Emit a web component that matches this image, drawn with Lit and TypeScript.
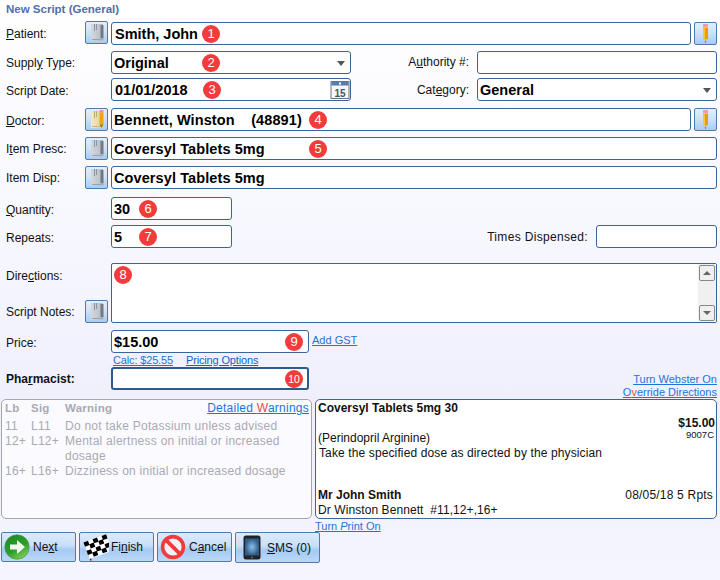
import { LitElement, html, css, svg } from "lit";
import { customElement } from "lit/decorators.js";

const bookIcon = (yellow = false) => html`<svg width="21" height="21" viewBox="0 0 21 21">
  <defs><linearGradient id="bk${yellow ? "y" : "g"}" x1="0" x2="1" y1="0" y2="0">
    <stop offset="0" stop-color="${yellow ? "#f4ecc0" : "#d4d9e0"}"/><stop offset="1" stop-color="${yellow ? "#e0d088" : "#b4bac4"}"/></linearGradient></defs>
  <rect x="5" y="2" width="12" height="17" fill="url(#bk${yellow ? "y" : "g"})"/>
  <path d="M8.5 2v7M10.5 2v6" stroke="${yellow ? "#b8aa70" : "#8e949e"}" stroke-width="1" fill="none"/>
  <path d="M6 17.5h10" stroke="${yellow ? "#c8b878" : "#9aa0a8"}"/>
  ${yellow
    ? svg`<rect x="13.5" y="1" width="4" height="2.5" fill="#f08ab0"/><rect x="13.5" y="3.5" width="4" height="12" fill="#f2a414"/><path d="M13.5 15.5h4l-2 3.5z" fill="#8a7a50"/>`
    : svg`<rect x="14.5" y="3" width="3" height="13" fill="#74787f"/><rect x="14.5" y="16" width="3" height="2" fill="#a8acb4"/>`}
</svg>`;

const pencilIcon = html`<svg width="21" height="21" viewBox="0 0 21 21">
  <rect x="8" y="1" width="5" height="3" fill="#f09ab8"/>
  <rect x="8" y="4" width="5" height="1" fill="#c8c8c0"/>
  <rect x="8" y="5" width="2" height="11" fill="#f8c828"/>
  <rect x="10" y="5" width="3" height="11" fill="#ee9a10"/>
  <path d="M8 16h5l-2.5 4z" fill="#c8c0a8"/><path d="M9.8 18.5h1.4l-.7 1.5z" fill="#444"/>
</svg>`;

const calendarIcon = html`<svg width="20" height="20" viewBox="0 0 20 20">
  <rect x="1" y="1.5" width="18" height="17" fill="#f6f6f6" stroke="#6a7682"/>
  <rect x="1.5" y="2" width="17" height="3.5" fill="#4f7db8"/>
  <rect x="9" y="2.5" width="2" height="2" fill="#fff"/>
  <text x="10" y="16.5" text-anchor="middle" font-family="Liberation Sans" font-size="10" fill="#4a5460">15</text>
</svg>`;

const nextIcon = html`<svg width="26" height="26" viewBox="0 0 26 26">
  <defs><linearGradient id="gn" x1="0.2" y1="0" x2="0.8" y2="1"><stop offset="0" stop-color="#1c8c20"/><stop offset=".55" stop-color="#2f9c2c"/><stop offset="1" stop-color="#86d860"/></linearGradient></defs>
  <circle cx="13" cy="13" r="12.2" fill="url(#gn)" stroke="#4c9c40" stroke-width=".8"/>
  <path d="M6 10.5h7V6l8 7-8 7v-4.5H6z" fill="#f2f6ee"/>
</svg>`;

const flagCells = () => {
  const out = [];
  for (let r = 0; r < 4; r++)
    for (let c = 0; c < 5; c++)
      if ((r + c) % 2 === 0) {
        const wave = c % 2 === 0 ? 0 : -0.8;
        out.push(svg`<rect x="${c * 4.8}" y="${r * 4.4 + wave}" width="4.8" height="4.4" fill="#000"/>`);
      }
  return out;
};
const flagIcon = html`<svg class="flag" width="27" height="27" viewBox="0 0 27 27">
  <path d="M9 26.5 L3 9" stroke="#3a3a3a" stroke-width="1.6"/>
  <g transform="translate(1.5 8.5) rotate(-20)">
    <rect width="24" height="17.6" fill="#fff"/>
    ${flagCells()}
  </g>
</svg>`;

const stopIcon = html`<svg width="26" height="26" viewBox="0 0 26 26">
  <circle cx="13" cy="13" r="10.4" fill="#f2f2f4" stroke="#ee3b3b" stroke-width="3.6"/>
  <path d="M5.6 5.6L20.4 20.4" stroke="#ee3b3b" stroke-width="3.8"/>
</svg>`;

const phoneIcon = html`<svg width="18" height="25" viewBox="0 0 18 25">
  <defs><radialGradient id="ph"><stop offset="0" stop-color="#8cc0e8"/><stop offset="1" stop-color="#2c5c88"/></radialGradient></defs>
  <rect x=".5" y=".5" width="17" height="24" rx="2.5" fill="#222226"/>
  <rect x="2" y="3.5" width="14" height="17" fill="url(#ph)"/>
  <circle cx="9" cy="22.4" r="1" fill="#666"/>
</svg>`;

const badge = (n: number, left: number, extra = "") =>
  html`<span class="badge ${extra}" style="left:${left}px">${n}</span>`;

@customElement("app-root")
export class AppRoot extends LitElement {
  static styles = css`
    :host {
      display: block; width: 720px; height: 580px; box-sizing: border-box; overflow: hidden;
      padding: 0 3px 0 1px;
      background: linear-gradient(#ffffff 0, #f8f8ff 200px, #f0f0fd 400px, #f5f5ff 580px);
      font-family: "Liberation Sans", Arial, sans-serif; font-size: 12px; color: #111;
    }
    .title { height: 22px; padding: 2px 0 0 5px; box-sizing: border-box; font-size: 11.5px; font-weight: bold; color: #4f6fac; line-height: 14px; }
    .row { display: flex; align-items: center; height: 23px; }
    .lbl { width: 84px; flex: none; padding: 1px 0 0 5px; box-sizing: border-box; white-space: nowrap; }
    .lbl.short { width: 110px; }
    .lbl.strong { font-weight: bold; font-size: 12px; }
    .lbl.lo { padding-top: 3px; }
    .bbtn {
      width: 23px; height: 23px; flex: none; box-sizing: border-box; display: flex; align-items: center; justify-content: center;
      border: 1px solid #4f7bac; border-radius: 2px;
      background: linear-gradient(#e4eefb 0, #d0e2f8 45%, #a8ccf4 100%);
    }
    .bbtn.up { margin-top: -2px; }
    .gap { width: 3px; flex: none; }
    .field {
      position: relative; flex: 1; height: 23px; box-sizing: border-box; display: flex; align-items: center;
      background: #fff; border: 1px solid #3c6496; border-radius: 3px; padding-left: 2px;
      font-weight: bold; font-size: 14.5px; color: #000; white-space: pre;
    }
    .field.p3 { padding-left: 3px; }
    .wide { letter-spacing: .1px; }
    .w240 { flex: none; width: 240px; }
    .w121 { flex: none; width: 121px; }
    .w198 { flex: none; width: 198px; }
    .thick { border-width: 2px; border-color: #2f5a8c; }
    .spacer { flex: 1; }
    .rlabel { text-align: right; white-space: nowrap; margin-right: 8px; }
    .rlabel.low { padding-top: 1px; }
    .rlabel.hi { padding-bottom: 1px; }
    .rlabel.times { letter-spacing: .33px; padding-top: 1px; }
    .caret { position: absolute; right: 5px; top: 9px; width: 0; height: 0; border-left: 4px solid transparent; border-right: 4px solid transparent; border-top: 5px solid #555; }
    .cal { position: absolute; right: 0; top: 1px; display: flex; }
    .badge {
      position: absolute; top: 50%; width: 18px; height: 18px; margin-top: -9px; border-radius: 50%;
      background: #f23c3c; color: #fff; font-size: 13px; font-weight: normal; text-align: center; line-height: 18px; letter-spacing: 0;
    }
    .badge.ten { font-size: 10.5px; }
    .badge.tl { top: 2px; margin-top: 0; }
    .m6 { margin-top: 6px; } .m4 { margin-top: 4px; } .m7 { margin-top: 7px; } .m8 { margin-top: 8px; } .m5 { margin-top: 5px; }
    .dirs { display: flex; height: 60px; margin-top: 15px; }
    .dirleft { width: 110px; flex: none; display: flex; flex-direction: column; justify-content: space-between; }
    .dirleft .top { padding: 5px 0 0 5px; line-height: 16px; }
    .dirleft .bot { display: flex; align-items: center; margin-top: auto; }
    .dirleft .bot .lbl { width: 84px; }
    .area {
      position: relative; flex: 1; box-sizing: border-box; background: #fff; border: 1px solid #3c6496; border-radius: 2px;
      display: flex; justify-content: flex-end;
    }
    .scroll { width: 18px; background: #f0f0f0; display: flex; flex-direction: column; justify-content: space-between; padding: 1px; box-sizing: border-box; align-items: center; }
    .sbtn { width: 16px; height: 16px; box-sizing: border-box; border: 1px solid #888; border-radius: 2px; background: #f0f0f0; display: flex; align-items: center; justify-content: center; }
    .tri-u { width: 0; height: 0; border-left: 4px solid transparent; border-right: 4px solid transparent; border-bottom: 4px solid #666; }
    .tri-d { width: 0; height: 0; border-left: 4px solid transparent; border-right: 4px solid transparent; border-top: 4px solid #666; }
    a { color: #1f74d8; text-decoration: underline; font-size: 11px; line-height: 14px; white-space: nowrap; }
    a i { color: #1f74d8; }
    a .red { color: #ec4a4a; }
    .addgst { margin: -4px 0 0 3px; }
    .calc { display: flex; height: 14px; padding-left: 112px; gap: 13px; align-items: center; }
    .calc a { letter-spacing: -.15px; }
    .calc .po { color: #1562c4; }
    .web { margin-left: auto; }
    .links { height: 9px; display: flex; justify-content: flex-end; }
    .links a { margin-top: -5px; }
    .panels { display: flex; gap: 3px; height: 120px; }
    .panel { box-sizing: border-box; border-radius: 5px; background: #fbfbff; }
    .warn { width: 311px; border: 1px solid #a4a6ac; padding: 1px 2px 0 3px; color: #a9a9b2; position: relative; letter-spacing: .25px; }
    .wgrid { display: grid; grid-template-columns: 26px 34px 1fr; line-height: 15px; }
    .wgrid .head { font-weight: bold; font-size: 11.5px; margin-bottom: 3px; }
    .wgrid .hw { display: flex; justify-content: space-between; }
    .wgrid .hw a { font-size: 12px; font-weight: normal; line-height: 15px; letter-spacing: .25px; }
    .rx { flex: 1; border: 1px solid #3c6496; background: #fff; padding: 1px 1px 0 2px; display: flex; flex-direction: column; justify-content: space-between; line-height: 15px; color: #111; }
    .rxl { display: flex; justify-content: space-between; white-space: pre; height: 15px; }
    .b { font-weight: bold; }
    .small { font-size: 9.5px; line-height: 11px; padding-right: 1px; margin-top: -2px; }
    .take { padding-left: 1px; letter-spacing: .12px; }
    .date { padding-right: 2px; letter-spacing: .2px; }
    .dr { letter-spacing: .08px; }
    .printl { height: 13px; padding-left: 314px; display: flex; align-items: center; }
    .btns { display: flex; gap: 3px; align-items: flex-start; }
    .btn {
      width: 75px; height: 30px; box-sizing: border-box; display: flex; align-items: center; white-space: nowrap;
      border: 1px solid #4f7bac; border-radius: 2px; padding-left: 2px; gap: 3px;
      background: linear-gradient(#dcebfc 0, #c8def8 45%, #a4caf4 60%, #bcd8f8 100%);
    }
    .btn.finish { gap: 2px; }
    .btn.sms { width: 85px; height: 31px; padding-left: 7px; gap: 6px; }
    .btn svg { flex: none; }
  `;

  render() {
    return html`
      <div class="title">New Script (General)</div>
      <div class="row">
        <div class="lbl"><u>P</u>atient:</div>
        <div class="bbtn up">${bookIcon()}</div><div class="gap"></div>
        <div class="field p3">Smith, John${badge(1, 90)}</div><div class="gap"></div>
        <div class="bbtn">${pencilIcon}</div>
      </div>
      <div class="row m6">
        <div class="lbl short">Suppl<u>y</u> Type:</div>
        <div class="field w240">Original${badge(2, 90)}<span class="caret"></span></div>
        <div class="spacer"></div>
        <div class="rlabel hi">A<u>u</u>thority #:</div>
        <div class="field w240"></div>
      </div>
      <div class="row m4">
        <div class="lbl short lo">Script Date:</div>
        <div class="field p3 w240">01/01/2018${badge(3, 91)}<span class="cal">${calendarIcon}</span></div>
        <div class="spacer"></div>
        <div class="rlabel low">Cat<u>e</u>gory:</div>
        <div class="field w240">General<span class="caret"></span></div>
      </div>
      <div class="row m7">
        <div class="lbl lo"><u>D</u>octor:</div>
        <div class="bbtn">${bookIcon(true)}</div><div class="gap"></div>
        <div class="field wide">Bennett, Winston    (48891)${badge(4, 197)}</div><div class="gap"></div>
        <div class="bbtn">${pencilIcon}</div>
      </div>
      <div class="row m6">
        <div class="lbl">I<u>t</u>em Presc:</div>
        <div class="bbtn">${bookIcon()}</div><div class="gap"></div>
        <div class="field wide">Coversyl Tablets 5mg${badge(5, 197)}</div>
      </div>
      <div class="row m6">
        <div class="lbl">Item Disp:</div>
        <div class="bbtn">${bookIcon()}</div><div class="gap"></div>
        <div class="field wide">Coversyl Tablets 5mg</div>
      </div>
      <div class="row m8">
        <div class="lbl short lo"><u>Q</u>uantity:</div>
        <div class="field w121">30${badge(6, 27)}</div>
      </div>
      <div class="row m5">
        <div class="lbl short lo">Repeats:</div>
        <div class="field w121">5${badge(7, 27)}</div>
        <div class="spacer"></div>
        <div class="rlabel times">Times Dispensed:</div>
        <div class="field w121"></div>
      </div>
      <div class="dirs">
        <div class="dirleft">
          <div class="top">Dire<u>c</u>tions:</div>
          <div class="bot"><div class="lbl">Script Notes:</div><div class="bbtn">${bookIcon()}</div></div>
        </div>
        <div class="area">
          ${badge(8, 2, "tl")}
          <div class="scroll">
            <div class="sbtn"><span class="tri-u"></span></div>
            <div class="sbtn"><span class="tri-d"></span></div>
          </div>
        </div>
      </div>
      <div class="row m7">
        <div class="lbl short lo">Price:</div>
        <div class="field w198">$15.00${badge(9, 173)}</div>
        <a class="addgst">Add GST</a>
      </div>
      <div class="calc"><a>Calc: $25.55</a><a class="po">Pricing Options</a></div>
      <div class="row">
        <div class="lbl short strong">Pha<u>r</u>macist:</div>
        <div class="field w198 thick"><span class="badge ten" style="left:172px">10</span></div>
        <a class="web">Turn Webster On</a>
      </div>
      <div class="links"><a>O<span class="red">v</span>erride Directions</a></div>
      <div class="panels">
        <div class="panel warn">
          <div class="wgrid">
            <div class="head">Lb</div><div class="head">Sig</div>
            <div class="head hw"><span>Warning</span><a>Detailed <span class="red">W</span>arnings</a></div>
            <div>11</div><div>L11</div><div>Do not take Potassium unless advised</div>
            <div>12+</div><div>L12+</div><div>Mental alertness on initial or increased dosage</div>
            <div>16+</div><div>L16+</div><div>Dizziness on initial or increased dosage</div>
          </div>
        </div>
        <div class="panel rx">
          <div>
            <div class="rxl b">Coversyl Tablets 5mg 30</div>
            <div class="rxl b"><span></span><span>$15.00</span></div>
            <div class="rxl"><span>(Perindopril Arginine)</span><span class="small">9007C</span></div>
            <div class="rxl take">Take the specified dose as directed by the physician</div>
          </div>
          <div>
            <div class="rxl"><span class="b">Mr John Smith</span><span class="date">08/05/18 5 Rpts</span></div>
            <div class="rxl dr">Dr Winston Bennett  #11,12+,16+</div>
          </div>
        </div>
      </div>
      <div class="printl"><a>Turn <i>P</i>rint On</a></div>
      <div class="btns">
        <div class="btn">${nextIcon}<span>Ne<u>x</u>t</span></div>
        <div class="btn finish">${flagIcon}<span>Fi<u>n</u>ish</span></div>
        <div class="btn">${stopIcon}<span>C<u>a</u>ncel</span></div>
        <div class="btn sms">${phoneIcon}<span><u>S</u>MS (0)</span></div>
      </div>
    `;
  }
}
